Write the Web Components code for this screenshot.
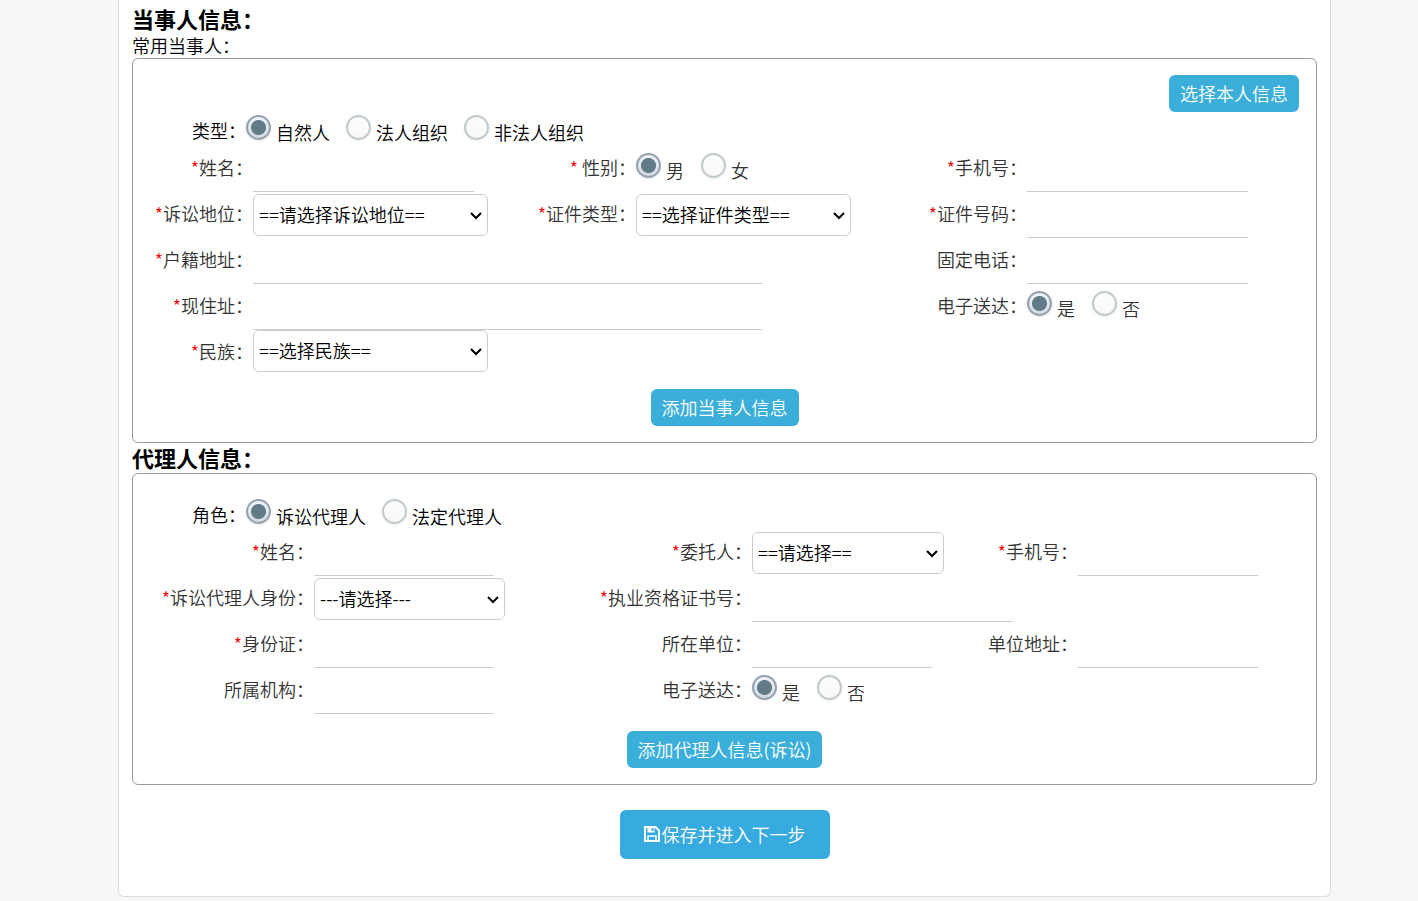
<!DOCTYPE html>
<html lang="zh-CN">
<head>
<meta charset="utf-8">
<title>当事人信息</title>
<style>
  body {
    margin: 0;
    background: #f7f7f7;
    color: #000;
    font: 350 18px/24px "Noto Sans CJK SC", sans-serif;
  }
</style>
</head>
<body>
<case-page></case-page>

<template id="case-page">
  <style>
    :host { display: block; margin: 0 87px 0 118px; }
    main {
      padding: 4px 13px 37px;
      background: #fff;
      border: 1px solid #ddd;
      border-top: 0;
      border-radius: 0 0 6px 6px;
    }
    h2 { margin: 0; padding-bottom: 2px; font-size: 22px; line-height: 28px; font-weight: 700; }
    p { margin: 0; padding-bottom: 2px; line-height: 22px; }
    .grid { display: grid; color: #333; }
    .party { grid-template-columns: 383fr 391fr 409fr; --label-width: 120px; }
    .agent { grid-template-columns: 438fr 326fr 419fr; --label-width: 181px; }
    .wide { grid-column: span 2; }
    .last { height: 42px; }
    .legend { height: 34px; padding-left: 59px; --group-top: 3px; --group-label: auto; }
    .right { display: flex; justify-content: flex-end; padding-right: 17px; }
    .center { display: flex; justify-content: center; }
    .add { margin-top: 17px; }
    .save { margin-top: 25px; }
    svg { display: block; margin-right: 2px; }
  </style>
  <main>
    <h2>当事人信息：</h2>
    <p>常用当事人：</p>
    <info-panel style="--panel-top: 16px">
      <div class="right"><action-button>选择本人信息</action-button></div>
      <radio-group class="legend" label="类型：" options="自然人,法人组织,非法人组织"></radio-group>
      <div class="grid party">
        <text-field label="姓名：" required width="221"></text-field>
        <radio-group label=" 性别：" required options="男,女"></radio-group>
        <text-field label="手机号：" required width="221"></text-field>
        <select-field label="诉讼地位：" required width="235" value="==请选择诉讼地位=="></select-field>
        <select-field label="证件类型：" required width="215" value="==选择证件类型=="></select-field>
        <text-field label="证件号码：" required width="221"></text-field>
        <text-field class="wide" label="户籍地址：" required width="509"></text-field>
        <text-field label="固定电话：" width="221"></text-field>
        <text-field class="wide" label="现住址：" required width="509"></text-field>
        <radio-group label="电子送达：" options="是,否"></radio-group>
        <select-field class="last" label="民族：" required width="235" value="==选择民族=="></select-field>
      </div>
      <div class="center add"><action-button>添加当事人信息</action-button></div>
    </info-panel>
    <h2>代理人信息：</h2>
    <info-panel style="--panel-top: 22px">
      <radio-group class="legend" label="角色：" options="诉讼代理人,法定代理人"></radio-group>
      <div class="grid agent">
        <text-field label="姓名：" required width="180"></text-field>
        <select-field label="委托人：" required width="192" value="==请选择=="></select-field>
        <text-field label="手机号：" required width="180"></text-field>
        <select-field label="诉讼代理人身份：" required width="191" value="---请选择---"></select-field>
        <text-field class="wide" label="执业资格证书号：" required width="261"></text-field>
        <text-field label="身份证：" required width="180"></text-field>
        <text-field label="所在单位：" width="180"></text-field>
        <text-field label="单位地址：" width="180"></text-field>
        <text-field label="所属机构：" width="180"></text-field>
        <radio-group label="电子送达：" options="是,否"></radio-group>
      </div>
      <div class="center add"><action-button>添加代理人信息(诉讼)</action-button></div>
    </info-panel>
    <div class="center save">
      <action-button size="large">
        <svg slot="icon" width="16" height="16" viewBox="0 0 16 16" fill="none" stroke="#fff" stroke-width="2" aria-hidden="true">
          <path d="M1 1h10.500L15 4.500V15H1z"/>
          <path d="M4 15v-5h8v5" stroke-width="1.500"/>
          <path d="M3.500 1h7v5.500h-7z" fill="#fff" stroke="none"/>
          <path d="M7.500 2h2v3h-2z" fill="#37aadf" stroke="none"/>
        </svg>保存并进入下一步</action-button>
    </div>
  </main>
</template>

<template id="info-panel">
  <style>
    :host {
      display: block;
      padding: var(--panel-top, 16px) 0 16px;
      border: 1px solid #999;
      border-radius: 6px;
    }
  </style>
  <slot></slot>
</template>

<template id="action-button">
  <style>
    :host { display: block; }
    button {
      display: flex;
      align-items: center;
      height: 37px;
      padding: 0 11px 2px;
      border: 0;
      border-radius: 6px;
      background: #3bafda;
      color: #fff;
      font: inherit;
      cursor: pointer;
    }
    :host([size="large"]) button { height: 49px; padding: 0 24px 2px; background: #37aadf; }
  </style>
  <button type="button"><slot name="icon"></slot><slot></slot></button>
</template>

<template id="text-field">
  <style>
    :host { display: grid; grid-template-columns: var(--label-width) 1fr; height: 46px; min-width: 0; }
    label { line-height: 42px; text-align: right; white-space: nowrap; }
    i { color: red; font-style: normal; }
    input {
      box-sizing: border-box;
      width: var(--control-width);
      max-width: 100%;
      height: 46px;
      padding: 0 6px;
      border: 0;
      border-bottom: 1px solid #ccc;
      background: transparent;
      color: #000;
      font: inherit;
      outline: 0;
    }
  </style>
  <label for="control"></label>
  <input id="control" type="text">
</template>

<template id="select-field">
  <style>
    :host { display: grid; grid-template-columns: var(--label-width) 1fr; height: 46px; min-width: 0; }
    label { line-height: 42px; text-align: right; white-space: nowrap; }
    i { color: red; font-style: normal; }
    select {
      appearance: none;
      box-sizing: border-box;
      align-self: center;
      width: var(--control-width);
      max-width: 100%;
      height: 42px;
      padding: 0 24px 2px 5px;
      border: 1px solid #ccc;
      border-radius: 6px;
      background: #fff url("data:image/svg+xml,%3Csvg xmlns='http://www.w3.org/2000/svg' width='12' height='8' fill='none' stroke='black' stroke-width='2'%3E%3Cpath d='M1 1l5 5 5-5'/%3E%3C/svg%3E") no-repeat right 5px top 17px;
      color: #000;
      font: inherit;
    }
  </style>
  <label for="control"></label>
  <select id="control"></select>
</template>

<template id="radio-group">
  <style>
    :host { display: grid; grid-template-columns: var(--group-label, var(--label-width)) 1fr; height: 46px; min-width: 0; }
    #name { line-height: 42px; text-align: right; white-space: pre; }
    #options { display: flex; gap: 17px; padding-top: var(--group-top, 7px); }
    #options label { display: flex; align-items: flex-start; gap: 5px; line-height: 34px; white-space: nowrap; }
    :host(.legend) #name { line-height: 36px; }
    :host(.legend) #options { gap: 16px; }
    :host(.legend) label { gap: 4px; }
    i { color: red; font-style: normal; }
    input {
      appearance: none;
      box-sizing: border-box;
      flex: none;
      width: 25px;
      height: 25px;
      margin: 0;
      border: 2px solid #c1caca;
      border-radius: 50%;
      background: linear-gradient(#fff, #f7f7f7) border-box;
      box-shadow: 0 1px 3px rgba(0, 0, 0, .08);
    }
    input:checked {
      border-color: #93a1af;
      background: radial-gradient(circle, #617b88 7px, transparent 8px), linear-gradient(#f1f4fa, #d5dae2);
    }
  </style>
  <div id="name"></div>
  <div id="options" role="radiogroup" aria-labelledby="name"></div>
</template>

<script>
  class BaseElement extends HTMLElement {
    constructor() {
      super();
      const template = document.getElementById(this.localName);
      this.attachShadow({ mode: "open" }).append(template.content.cloneNode(true));
    }
    fillLabel(node) {
      if (this.hasAttribute("required")) {
        const star = document.createElement("i");
        star.textContent = "*";
        node.append(star);
      }
      node.append(this.getAttribute("label"));
    }
  }

  class InfoPanel extends BaseElement {}
  class ActionButton extends BaseElement {}
  class CasePage extends BaseElement {}

  class TextField extends BaseElement {
    connectedCallback() {
      if (this.ready) return;
      this.ready = true;
      this.fillLabel(this.shadowRoot.querySelector("label"));
      const control = this.shadowRoot.getElementById("control");
      control.style.setProperty("--control-width", this.getAttribute("width") + "px");
      control.required = this.hasAttribute("required");
    }
  }

  class SelectField extends TextField {
    connectedCallback() {
      if (this.ready) return;
      super.connectedCallback();
      this.shadowRoot.getElementById("control").add(new Option(this.getAttribute("value"), ""));
    }
  }

  class RadioGroup extends BaseElement {
    connectedCallback() {
      if (this.ready) return;
      this.ready = true;
      this.fillLabel(this.shadowRoot.getElementById("name"));
      const box = this.shadowRoot.getElementById("options");
      this.getAttribute("options").split(",").forEach((text, index) => {
        const label = document.createElement("label");
        const input = document.createElement("input");
        const caption = document.createElement("span");
        input.type = "radio";
        input.name = "choice";
        input.value = text;
        input.checked = index === 0;
        caption.textContent = text;
        label.append(input, caption);
        box.append(label);
      });
    }
  }

  customElements.define("info-panel", InfoPanel);
  customElements.define("action-button", ActionButton);
  customElements.define("text-field", TextField);
  customElements.define("select-field", SelectField);
  customElements.define("radio-group", RadioGroup);
  customElements.define("case-page", CasePage);
</script>
</body>
</html>
